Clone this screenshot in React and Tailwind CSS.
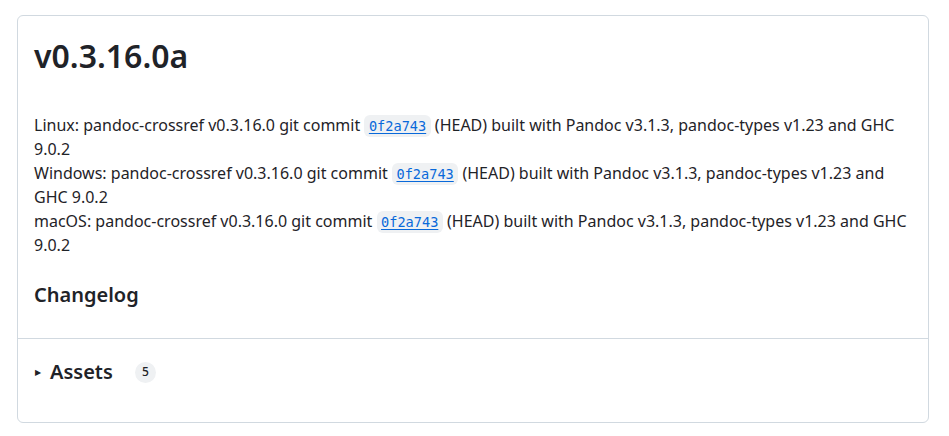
export default function App() {
  const Sha = () => (
    <a
      href="#"
      className="rounded-md bg-[#eff1f3] px-[4.5px] py-[3px] text-[13.6px] leading-4 text-[#0969da] underline underline-offset-2"
      style={{ fontFamily: '"DejaVu Sans Mono", "Liberation Mono", monospace' }}
    >
      0f2a743
    </a>
  );

  const lines = ["Linux", "Windows", "macOS"];

  return (
    <div
      className="min-h-screen bg-white px-[17px] pt-[15px] text-[#1f2328]"
      style={{ fontFamily: '"Noto Sans", "Liberation Sans", sans-serif' }}
    >
      <div className="w-[912px] rounded-md border border-[#d1d9e0] bg-white">
        <div className="px-4 pt-5 pb-7">
          <h1 className="text-[32px] font-semibold leading-10">v0.3.16.0a</h1>
          <div className="mt-[37px] text-base leading-6">
            {lines.map((os) => (
              <div key={os}>
                {os}: pandoc-crossref v0.3.16.0 git commit <Sha /> (HEAD) built with Pandoc v3.1.3,
                pandoc-types v1.23 and GHC 9.0.2
              </div>
            ))}
          </div>
          <h2 className="mt-[23px] text-xl font-semibold leading-[30px]">Changelog</h2>
        </div>
        <div className="border-t border-[#d1d9e0] px-4 pt-[18px] pb-[35px]">
          <div className="flex items-center">
            <span className="mr-[9px] ml-[1px] text-[8px] leading-none">&#9654;</span>
            <span className="text-xl font-semibold leading-[30px]">Assets</span>
            <span className="ml-[22px] flex h-[21px] min-w-[21px] items-center justify-center rounded-full bg-[#eff1f3] px-[6px] text-xs font-medium">
              5
            </span>
          </div>
        </div>
      </div>
    </div>
  );
}
